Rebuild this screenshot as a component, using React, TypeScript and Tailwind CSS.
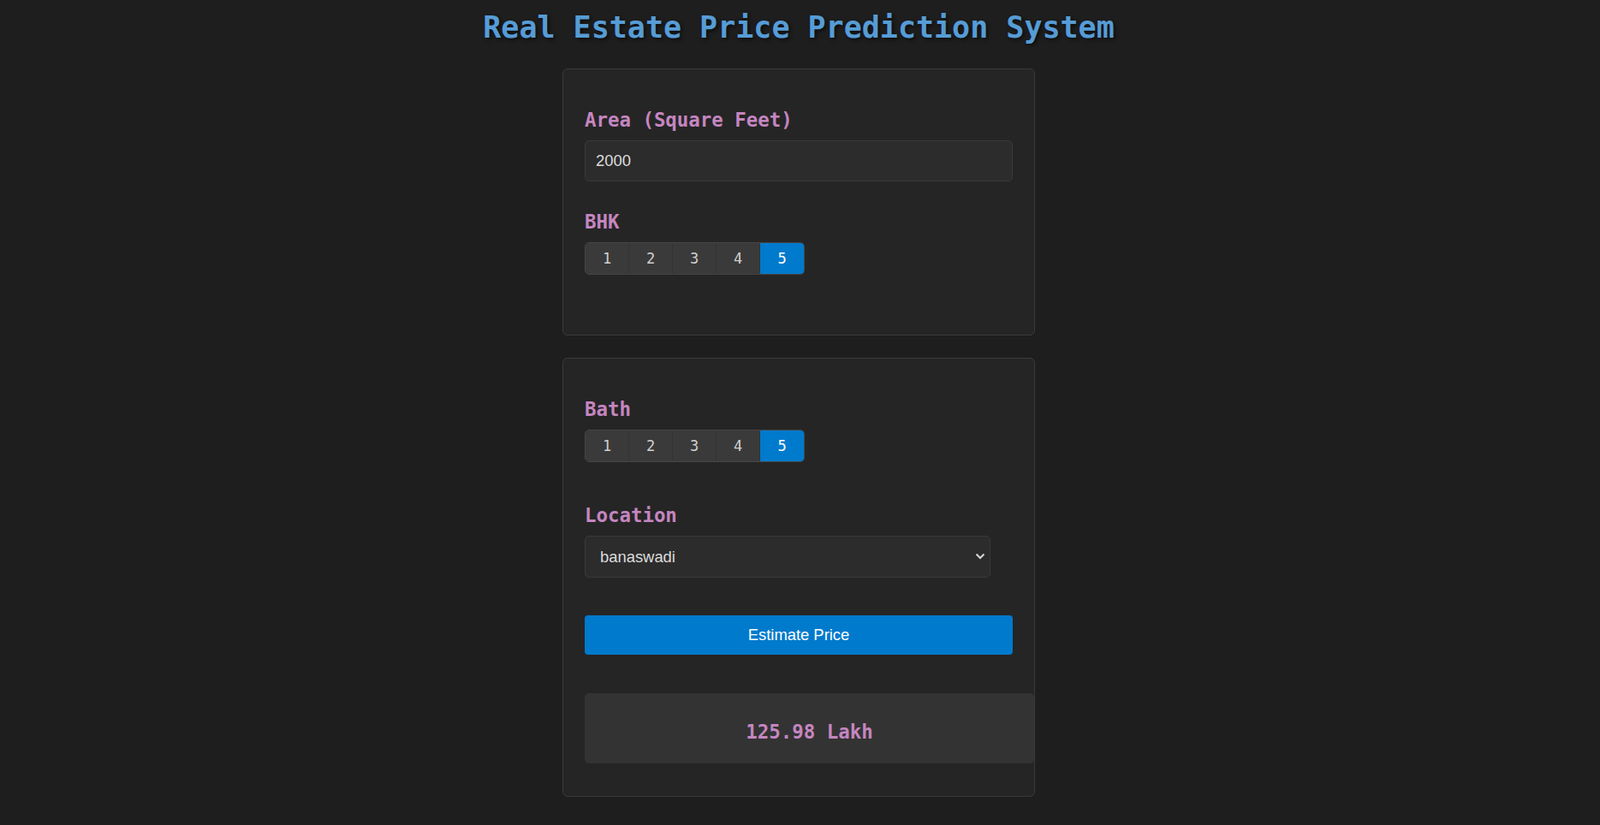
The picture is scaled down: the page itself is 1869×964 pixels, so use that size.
import React, { useState } from "react";

const mono = "font-['DejaVu_Sans_Mono',monospace]";
const sans = "font-['Liberation_Sans',Arial,sans-serif]";

function Segmented({ value, onChange }: { value: number; onChange: (n: number) => void }) {
  return (
    <div className="flex w-fit overflow-hidden rounded-[5px] border border-[#454545]">
      {[1, 2, 3, 4, 5].map((n, i) => (
        <button
          key={n}
          onClick={() => onChange(n)}
          className={
            (n === value ? "bg-[#007acc] text-white " : "bg-[#3a3a3a] text-[#d0d0d0] ") +
            (i < 4 ? "border-r border-[#333333] " : "") +
            `${mono} flex h-[36px] w-[51px] items-center justify-center text-[17px] leading-none`
          }
        >
          {n}
        </button>
      ))}
    </div>
  );
}

function Label({ children }: { children: React.ReactNode }) {
  return (
    <div className={`${mono} mb-[11px] pt-[1px] text-[22.4px] font-bold leading-[26px] text-[#c586c0]`}>{children}</div>
  );
}

export default function App() {
  const [bhk, setBhk] = useState(5);
  const [bath, setBath] = useState(5);
  return (
    <div className={`min-h-screen bg-[#1e1e1e] pb-[40px] pr-[3px] ${sans}`}>
      <h1
        className={`${mono} pt-[12px] text-center text-[35px] font-bold leading-[41px] text-[#569cd6] [text-shadow:2px_2px_4px_rgba(0,0,0,0.6)]`}
      >
        Real Estate Price Prediction System
      </h1>

      <div className="mx-auto mt-[27px] w-[552px] rounded-[6px] border border-[#3a3a3a] bg-[#252525] px-[25px] pb-[70px] pt-[45px]">
        <Label>Area (Square Feet)</Label>
        <input
          defaultValue="2000"
          className={`${sans} h-[48px] w-full rounded-[5px] border border-[#3a3a3a] bg-[#2c2c2c] px-[12px] text-[18.4px] text-[#dcdcdc] outline-none`}
        />
        <div className="mt-[33px]">
          <Label>BHK</Label>
          <Segmented value={bhk} onChange={setBhk} />
        </div>
      </div>

      <div className="mx-auto mt-[26px] w-[552px] rounded-[6px] border border-[#3a3a3a] bg-[#252525] pb-[38px] pl-[25px] pt-[45px]">
        <Label>Bath</Label>
        <Segmented value={bath} onChange={setBath} />

        <div className="mt-[48px]">
          <Label>Location</Label>
          <div className="relative w-[474px]">
            <select
              defaultValue="banaswadi"
              className={`${sans} h-[49px] w-full appearance-none rounded-[5px] border border-[#3a3a3a] bg-[#2c2c2c] pl-[17px] text-[18.4px] text-[#dcdcdc] outline-none`}
            >
              <option value="banaswadi">banaswadi</option>
              <option value="whitefield">whitefield</option>
            </select>
            <svg
              className="pointer-events-none absolute right-[6px] top-[20px]"
              width="12"
              height="8"
              viewBox="0 0 12 8"
            >
              <path d="M1.5 1.5 L6 6 L10.5 1.5" fill="none" stroke="#d8d8d8" strokeWidth="2" />
            </svg>
          </div>
        </div>

        <button
          className={`${sans} mt-[44px] h-[46px] w-[500px] rounded-[4px] bg-[#007acc] text-[18.4px] text-white`}
        >
          Estimate Price
        </button>

        <div
          className={`${mono} mt-[45px] flex h-[82px] w-[525px] items-center justify-center rounded-[5px] bg-[#333333] pt-[9px] text-[22.4px] font-bold text-[#c586c0]`}
        >
          125.98 Lakh
        </div>
      </div>
    </div>
  );
}
